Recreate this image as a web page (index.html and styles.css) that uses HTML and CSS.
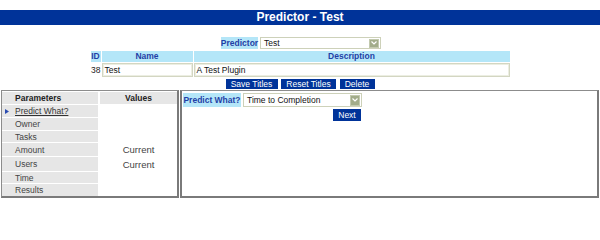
FILE: index.html
```html
<!DOCTYPE html>
<html>
<head>
<meta charset="utf-8">
<title>Predictor - Test</title>
<link rel="stylesheet" href="styles.css">
</head>
<body>
<div class="titlebar">Predictor - Test</div>

<div class="pred-row">
  <div class="label">Predictor</div>
  <div class="select sel-top">
    <span>Test</span>
    <span class="arrow"><svg width="6" height="4" viewBox="0 0 6 4"><path d="M0.5 0.5 L3 3 L5.5 0.5" fill="none" stroke="#fff" stroke-width="1.2"/></svg></span>
  </div>
</div>

<div class="ptable">
  <div class="th">ID</div>
  <div class="th">Name</div>
  <div class="th">Description</div>
  <div class="td-id">38</div>
  <div class="input">Test</div>
  <div class="input">A Test Plugin</div>
</div>

<div class="btns">
  <div class="btn w-save">Save Titles</div>
  <div class="btn w-reset">Reset Titles</div>
  <div class="btn w-del">Delete</div>
</div>

<div class="panels">
  <div class="left">
    <div class="prow head"><div class="pname">Parameters</div><div class="pval">Values</div></div>
    <div class="prow h12"><div class="pname"><span class="mark"><svg width="4" height="5" viewBox="0 0 4 5"><path d="M0 0 L4 2.5 L0 5 Z" fill="#2a4bb0"/></svg></span><span class="link">Predict What?</span></div><div class="pval"></div></div>
    <div class="prow h12"><div class="pname">Owner</div><div class="pval"></div></div>
    <div class="prow h11"><div class="pname">Tasks</div><div class="pval"></div></div>
    <div class="prow h13"><div class="pname">Amount</div><div class="pval">Current</div></div>
    <div class="prow h14"><div class="pname">Users</div><div class="pval">Current</div></div>
    <div class="prow h11"><div class="pname">Time</div><div class="pval"></div></div>
    <div class="prow h12"><div class="pname">Results</div><div class="pval"></div></div>
  </div>
  <div class="right">
    <div class="pw">
      <div class="pw-row">
        <div class="label pw-label">Predict What?</div>
        <div class="select sel-pw">
          <span>Time to Completion</span>
          <span class="arrow"><svg width="6" height="4" viewBox="0 0 6 4"><path d="M0.5 0.5 L3 3 L5.5 0.5" fill="none" stroke="#fff" stroke-width="1.2"/></svg></span>
        </div>
      </div>
      <div class="btn w-next">Next</div>
    </div>
  </div>
</div>
</body>
</html>
```

FILE: styles.css
```css
body {
  margin: 0;
  font-family: "Liberation Sans", Arial, sans-serif;
  font-size: 8.5px;
  color: #222;
  background: #fff;
}

.titlebar {
  margin-top: 10px;
  height: 15px;
  line-height: 15px;
  background: #003399;
  color: #fff;
  font-weight: bold;
  font-size: 12px;
  text-align: center;
}

.pred-row {
  display: flex;
  justify-content: center;
  gap: 2px;
  margin-top: 12px;
  padding-left: 2px;
  height: 12px;
}

.label {
  background: #b4e6f8;
  color: #1f3fa6;
  font-weight: bold;
  display: flex;
  align-items: center;
  justify-content: center;
  box-sizing: border-box;
}

.pred-row .label {
  width: 37px;
}

.select {
  display: flex;
  align-items: center;
  justify-content: space-between;
  box-sizing: border-box;
  border: 1px solid #cdd1b9;
  background: #fff;
  padding-left: 3px;
  color: #111;
}

.sel-top {
  width: 121px;
  height: 12px;
}

.arrow {
  width: 10px;
  height: 9px;
  margin-right: 1px;
  background: #a2ac8a;
  border: 1px solid #c2c9ae;
  box-sizing: border-box;
  display: flex;
  align-items: center;
  justify-content: center;
}

.ptable {
  display: grid;
  grid-template-columns: 10px 91px 316px;
  column-gap: 1px;
  row-gap: 1px;
  width: max-content;
  margin: 2px auto 0;
}

.th {
  background: #b4e6f8;
  color: #1f3fa6;
  font-weight: bold;
  text-align: center;
  height: 11px;
  line-height: 11px;
}

.td-id {
  height: 14px;
  display: flex;
  align-items: center;
  justify-content: flex-end;
}

.input {
  height: 14px;
  box-sizing: border-box;
  border: 1px solid #d3d6c2;
  box-shadow: inset 0 0 0 1px #eceee2;
  padding-left: 2px;
  display: flex;
  align-items: center;
  color: #111;
}

.btns {
  display: flex;
  justify-content: center;
  gap: 3.5px;
  margin-top: 2px;
}

.btn {
  background: #003399;
  color: #fff;
  height: 10px;
  line-height: 10px;
  text-align: center;
}

.w-save { width: 52px; }
.w-reset { width: 55px; }
.w-del { width: 35px; }

.panels {
  display: flex;
  gap: 1px;
  margin: 1px 1px 0;
}

.left {
  width: 178px;
  box-sizing: border-box;
  border: 1px solid #8c8c8c;
  border-right: 2px solid #7a7a7a;
  border-bottom: 2px solid #7a7a7a;
  padding-top: 1px;
  display: flex;
  flex-direction: column;
  gap: 1px;
}

.prow {
  display: flex;
  gap: 2px;
}

.prow.head { height: 12px; }
.h11 { height: 11px; }
.h12 { height: 12px; }
.h13 { height: 13px; }
.h14 { height: 14px; }

.pname {
  width: 96px;
  background: #e6e6e6;
  color: #444;
  display: flex;
  align-items: center;
  padding-left: 13px;
  box-sizing: border-box;
  position: relative;
}

.pval {
  flex: 1;
  display: flex;
  align-items: center;
  justify-content: center;
  color: #444;
  font-size: 9.5px;
}

.head .pname,
.head .pval {
  font-weight: bold;
  color: #222;
  font-size: 8.5px;
}

.head .pval {
  background: #e6e6e6;
}

.mark {
  position: absolute;
  left: 3px;
  top: 4px;
  display: flex;
}

.link {
  text-decoration: underline;
  color: #333;
}

.right {
  flex: 1;
  box-sizing: border-box;
  border: 2px solid #7a7a7a;
  border-top: 1px solid #8c8c8c;
  padding: 2px 0 0 1px;
}

.pw {
  display: inline-flex;
  flex-direction: column;
  align-items: flex-end;
  gap: 2px;
}

.pw-row {
  display: flex;
  gap: 2px;
}

.pw-label {
  width: 58px;
  height: 14px;
}

.sel-pw {
  width: 119px;
  height: 14px;
}

.sel-pw .arrow {
  height: 11px;
}

.w-next {
  width: 28px;
  height: 12px;
  line-height: 12px;
  margin-right: 1px;
}
```
